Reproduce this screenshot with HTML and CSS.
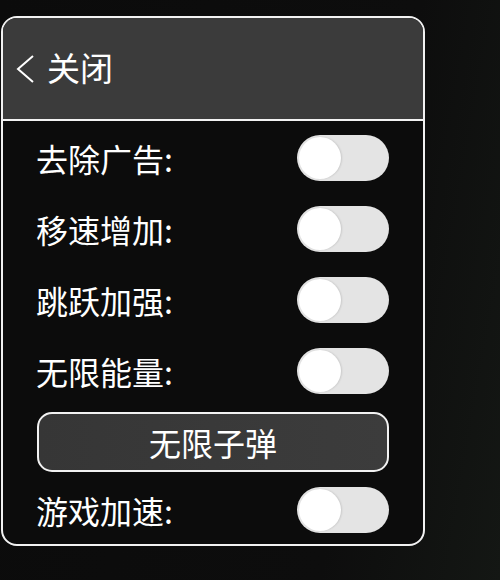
FILE: index.html
```html
<!DOCTYPE html>
<html lang="zh">
<head>
<meta charset="utf-8">
<link rel="stylesheet" href="styles.css">
</head>
<body>
<div class="screen">
  <div class="panel">
    <div class="header">
      <svg class="back" width="20" height="30" viewBox="0 0 20 30"><polyline points="17,2 2,15 17,28" fill="none" stroke="#ffffff" stroke-width="2"/></svg>
      <span class="title">关闭</span>
    </div>
    <div class="body">
      <div class="row"><span class="label">去除广告:</span><span class="toggle"><span class="knob"></span></span></div>
      <div class="row"><span class="label">移速增加:</span><span class="toggle"><span class="knob"></span></span></div>
      <div class="row"><span class="label">跳跃加强:</span><span class="toggle"><span class="knob"></span></span></div>
      <div class="row"><span class="label">无限能量:</span><span class="toggle"><span class="knob"></span></span></div>
      <div class="row"><div class="btn">无限子弹</div></div>
      <div class="row last"><span class="label">游戏加速:</span><span class="toggle"><span class="knob"></span></span></div>
    </div>
  </div>
</div>
</body>
</html>
```

FILE: styles.css
```css
html, body {
  margin: 0;
  padding: 0;
}
body {
  width: 500px;
  height: 580px;
  overflow: hidden;
  background: linear-gradient(100deg, #0b0b0b 0%, #0d0d0d 70%, #141714 100%);
  font-family: "Noto Sans CJK SC", "Noto Sans", sans-serif;
  color: #ffffff;
}
.screen {
  padding-top: 16px;
  padding-left: 1px;
}
.panel {
  width: 420px;
  height: 526px;
  border: 2px solid #f2f2f2;
  border-radius: 16px;
  overflow: hidden;
  background: #0c0c0c;
  display: flex;
  flex-direction: column;
}
.header {
  height: 101px;
  flex: none;
  background: #3b3b3b;
  border-bottom: 2px solid #f2f2f2;
  display: flex;
  align-items: center;
  padding-left: 13px;
  gap: 11px;
}
.back {
  display: block;
}
.title {
  font-size: 33px;
  line-height: 1;
  margin-top: -2px;
}
.body {
  padding: 1px 34px 0 34px;
  display: flex;
  flex-direction: column;
}
.row {
  height: 71px;
  display: flex;
  align-items: center;
  justify-content: space-between;
}
.row.last {
  height: 66px;
  padding-bottom: 4px;
}
.label {
  font-size: 32px;
  line-height: 1;
  margin-left: -1px;
}
.toggle {
  width: 92px;
  height: 46px;
  border-radius: 23px;
  background: #e4e4e4;
  display: flex;
  align-items: center;
  padding-left: 2px;
  box-sizing: border-box;
}
.knob {
  width: 42px;
  height: 42px;
  border-radius: 50%;
  background: #ffffff;
  box-shadow: 1px 0 2px rgba(0,0,0,0.12);
}
.btn {
  width: 100%;
  height: 60px;
  box-sizing: border-box;
  border: 2px solid #f2f2f2;
  border-radius: 15px;
  background: linear-gradient(90deg, #363636 0%, #3c3c3c 100%);
  display: flex;
  align-items: center;
  justify-content: center;
  font-size: 32px;
  line-height: 1;
}
```
